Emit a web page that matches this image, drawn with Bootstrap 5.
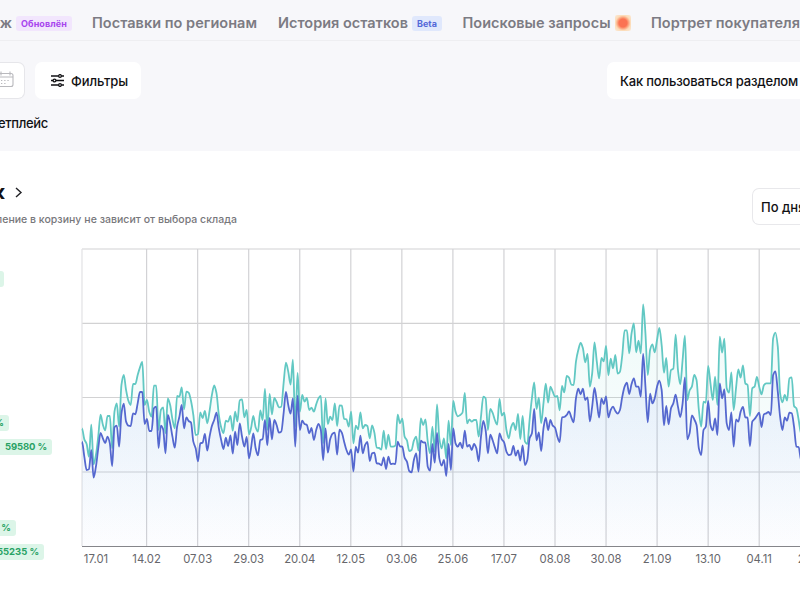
<!DOCTYPE html>
<html lang="ru">
<head>
<meta charset="utf-8">
<meta name="viewport" content="width=device-width, initial-scale=1">
<title>Аналитика</title>
<link href="https://cdn.jsdelivr.net/npm/bootstrap@5.3.0/dist/css/bootstrap.min.css" rel="stylesheet">
<style>
body { width: 800px; height: 600px; overflow: hidden; font-family: Inter, "Noto Sans", sans-serif; color: #111114; background: #fff; font-size: 13px; line-height: 1; }
.clip-start { display: flex; justify-content: flex-end; overflow: hidden; white-space: nowrap; flex: none; }
.page-head { height: 151px; background: #f7f7fa; }
.tabs-bar { height: 41px; border-bottom: 1px solid #eeeef1; padding-top: 6px; color: #7c7b83; font-size: 14.5px; font-weight: 600; }
.tab-item { flex: none; white-space: nowrap; padding-top: 1px; }
.tag { font-size: 9px; font-weight: 700; height: 15px; line-height: 15px; border-radius: 3px; flex: none; text-align: center; }
.tag-new { width: 56px; background: #f2e6fd; color: #a845ee; }
.tag-beta { width: 30px; background: #e0e8fc; color: #5468d8; }
.hot { width: 16px; height: 16px; border-radius: 2px; background: radial-gradient(circle, #fb7352 0 4px, #fca27c 5.5px, #fcdcb9 7.5px, #fbead8 11px); flex: none; }
.tools { height: 37px; margin-top: 21px; font-weight: 500; }
.date-box { width: 25px; height: 37px; border: 1px solid #e6e6ea; border-left: 0; border-radius: 0 7px 7px 0; background: #fff; }
.filter-btn { width: 106px; height: 37px; border-radius: 7px; background: #fff; margin-left: 10px; padding-left: 16px; }
.guide-btn { width: 193px; height: 37px; border-radius: 7px 0 0 7px; background: #fff; padding: 1px 0 0 13px; white-space: nowrap; }
.place { width: 48px; margin-top: 18px; font-weight: 500; }
.title-row { height: 74px; padding-top: 31px; }
.title-end { width: 5px; font-size: 20px; font-weight: 700; }
.hint { width: 237px; font-size: 10.5px; font-weight: 500; color: #77777b; margin-top: 13px; }
.period { width: 48px; height: 37px; border: 1px solid #e8e8eb; border-right: 0; border-radius: 7px 0 0 7px; padding: 1px 0 0 8px; margin-top: 6px; font-weight: 500; white-space: nowrap; overflow: hidden; }
.stats { width: 74px; padding-top: 46px; flex: none; }
.delta { height: 16px; border-radius: 0 3px 3px 0; background: #dcf5e8; color: #28a264; font-size: 9.5px; font-weight: 700; line-height: 16px; }
.d-a { width: 4px; } .d-b { width: 9px; margin-top: 128px; padding-right: 5px; }
.d-c { width: 52px; margin-top: 8px; padding-right: 5px; } .d-d { width: 16px; margin-top: 65px; padding-right: 5px; }
.d-e { width: 44px; margin-top: 8px; padding-right: 5px; }
.axis-label { font-size: 11.3px; fill: #66666b; text-anchor: middle; }
</style>
<script src="https://cdn.jsdelivr.net/npm/bootstrap@5.3.0/dist/js/bootstrap.bundle.min.js"></script>
</head>
<body>
<header class="page-head">
  <nav class="tabs-bar d-flex align-items-center">
    <span class="clip-start" style="width:12px;padding-top:1px"><span>ж</span></span>
    <span class="tag tag-new" style="margin-left:4px"><span data-fit="46">Обновлён</span></span>
    <span class="tab-item" style="margin-left:20px;width:165px"><span data-fit="165">Поставки по регионам</span></span>
    <span class="tab-item" style="margin-left:21px;width:130px"><span data-fit="130">История остатков</span></span>
    <span class="tag tag-beta" style="margin-left:4px">Beta</span>
    <span class="tab-item" style="margin-left:20.500px;width:148px"><span data-fit="148">Поисковые запросы</span></span>
    <span class="hot" style="margin-left:4px"></span>
    <span class="tab-item" style="margin-left:20.500px;width:149px"><span data-fit="149">Портрет покупателя</span></span>
  </nav>
  <div class="tools d-flex align-items-center">
    <div class="date-box d-flex align-items-center overflow-hidden">
      <svg width="14" height="20" viewBox="0 0 14 20" style="margin-top:-3px" fill="none" stroke="#b9b9bd" stroke-width="1.1"><path d="M0 4.5h11q2 0 2 2v9q0 2-2 2H0M0 8h13M10 2.5v4M1 2.5v4"/><path d="M1 11.5h9M1 14.500h6" stroke-dasharray="1.3 1.9"/></svg>
    </div>
    <div class="filter-btn d-flex align-items-center">
      <svg width="13" height="13" viewBox="0 0 13 13" fill="none" stroke="#111114" stroke-width="1.3"><path d="M0 2h7.500M10.500 2H13M0 6.500h2M5 6.500h8M0 11h7.500M10.500 11H13"/><circle cx="9" cy="2" r="1.400"/><circle cx="3.500" cy="6.500" r="1.400"/><circle cx="9" cy="11" r="1.400"/></svg>
      <span class="text-nowrap" style="margin-left:7px;padding-top:1px"><span data-fit="57">Фильтры</span></span>
    </div>
    <div class="guide-btn d-flex align-items-center ms-auto"><span data-fit="178">Как пользоваться разделом</span></div>
  </div>
  <div class="place clip-start"><span data-fit="83">Маркетплейс</span></div>
</header>
<main>
  <div class="title-row d-flex justify-content-between">
    <div>
      <div class="d-flex align-items-center">
        <div class="title-end clip-start"><span>к</span></div>
        <svg width="8" height="11" viewBox="0 0 8 11" style="margin-left:10px" fill="none" stroke="#222226" stroke-width="1.4"><path d="M1 1l5 4.500L1 10"/></svg>
      </div>
      <div class="hint clip-start"><span>Добавление <span data-fit="207">в корзину не зависит от выбора склада</span></span></div>
    </div>
    <div class="period d-flex align-items-center">По дням</div>
  </div>
  <div class="d-flex">
    <div class="stats">
      <div class="delta d-a"></div>
      <div class="delta d-b clip-start">%</div>
      <div class="delta d-c clip-start"><span data-fit="42">59580 %</span></div>
      <div class="delta d-d clip-start">%</div>
      <div class="delta d-e clip-start"><span data-fit="42">55235 %</span></div>
    </div>
    <svg id="chart" width="726" height="345" viewBox="74 225 726 345">
      <defs>
        <linearGradient id="tealFill" gradientUnits="userSpaceOnUse" x1="0" y1="300" x2="0" y2="546"><stop stop-color="#63d0c8" stop-opacity=".11"/><stop offset="1" stop-color="#63d0c8" stop-opacity="0"/></linearGradient>
        <linearGradient id="blueFill" gradientUnits="userSpaceOnUse" x1="0" y1="350" x2="0" y2="546"><stop stop-color="#5b7cf0" stop-opacity=".11"/><stop offset="1" stop-color="#5b7cf0" stop-opacity=".015"/></linearGradient>
      </defs>
    </svg>
  </div>
</main>
<script>
// Fit labels to their column widths through tracking.
document.querySelectorAll('[data-fit]').forEach(el => {
  const want = +el.dataset.fit, w = el.getBoundingClientRect().width;
  el.style.letterSpacing = (want - w) / el.textContent.length + 'px';
});

// Daily samples by period: [first x, last x, top level, depths in thirds of a pixel].
const teal = [
 [82,249,340,[265,298,312,350,254,373,345,290,224,254,271,228,228,325,215,190,260,135,105,150,182,195,132,132,105,82,66,195,180,215,230,137,137,270,210,202,280,175,195,238,265,168,170,142,208,155,158,183,225,285,283,217,234,213,250,213,165,136,160,225,262,279,242,245,228,272,215,244,181,178,232,210,283]],
 [251,400,340,[265,228,262,275,211,240,147,270,162,223,174,186,202,200,130,68,95,134,59,260,99,215,165,185,174,210,203,215,193,175,168,310,175,252,230,240,190,258,196,197,237,238,260,215,310,257,268,217,265,255,258,295,256,278,323,324,329,272,327,284,320,320,317,224,250]],
 [402.3,564.3,370,[146,200,211,243,240,212,200,242,145,165,148,215,250,170,245,103,205,235,205,265,152,225,93,125,139,135,128,69,160,148,155,150,150,200,140,80,85,180,117,128,150,164,87,137,128,180,205,172,159,180,132,207,138,215,222,150,85,37,117,83,160,100,41,98,50,65,80,78,121,48,67]],
 [566.7,668.6,290,[258,263,284,285,215,180,159,175,217,192,290,250,157,215,265,204,214,168,256,206,235,195,251,245,195,121,121,190,130,100,187,152,190,43,130,255,180,163,187,150,114,165,248,204,290]],
 [671,801,320,[150,146,44,150,193,120,47,240,211,200,165,180,270,320,245,248,138,190,240,170,255,50,98,56,205,218,157,270,205,148,173,136,190,195,288,205,200,171,200,223,196,190,190,190,55,38,80,220,247,225,242,175,172,258,265,300,340]]
];
const blue = [
 [82,249,340,[305,350,390,388,330,413,380,325,279,295,309,290,310,378,262,257,320,220,191,245,257,258,220,223,190,156,156,252,237,273,273,205,200,324,257,268,340,225,250,290,323,260,230,195,265,232,243,248,305,325,364,310,308,282,332,290,258,240,218,265,300,327,293,318,286,341,275,315,250,290,320,291,355]],
 [251,400,340,[325,280,325,346,300,297,240,316,234,298,240,255,278,275,220,156,195,221,175,320,167,270,242,252,255,280,264,300,270,252,270,360,265,338,298,281,278,344,269,278,305,330,344,328,394,320,338,287,340,315,306,363,340,338,370,371,376,352,387,350,372,371,372,305,319]],
 [402.3,564.3,370,[230,263,275,303,307,270,250,305,212,217,218,290,302,222,278,189,265,287,270,318,222,300,175,220,230,218,235,182,230,225,240,222,235,274,200,153,180,250,194,210,232,250,190,208,217,245,255,253,228,257,241,272,226,285,270,205,190,117,211,187,243,175,143,180,150,167,173,200,216,142,141]],
 [566.7,668.6,290,[375,364,382,397,325,296,313,296,330,322,394,350,294,335,383,325,342,319,382,360,350,363,371,360,320,290,278,312,282,265,290,290,320,192,290,397,311,340,325,290,272,300,406,348,403]],
 [671,801,320,[265,250,224,260,291,250,172,358,340,286,298,315,385,405,330,320,243,315,331,295,345,190,235,208,310,330,277,380,298,305,275,261,292,293,379,305,297,287,278,321,283,280,276,285,165,154,215,290,330,292,302,278,280,320,380,381,420]]
];
const svg = document.getElementById('chart');
function add(tag, attrs, text) {
  const e = document.createElementNS('http://www.w3.org/2000/svg', tag);
  for (const k in attrs) e.setAttribute(k, attrs[k]);
  if (text) e.textContent = text;
  svg.appendChild(e);
}
const points = s => s.flatMap(([a, b, top, v]) => v.map((y, i) => [a + (b - a) * i / (v.length - 1), top + y / 3]));
// Monotone cubic: flat tangents at local extremes.
function curve(p) {
  const m = p.map((q, i) => {
    if (!i || i === p.length - 1) return 0;
    const l = (q[1] - p[i-1][1]) / (q[0] - p[i-1][0]), r = (p[i+1][1] - q[1]) / (p[i+1][0] - q[0]);
    return l * r <= 0 ? 0 : 2 * l * r / (l + r);
  });
  let d = `M${p[0]}`;
  for (let i = 1; i < p.length; i++) {
    const h = (p[i][0] - p[i-1][0]) / 3;
    d += `C${p[i-1][0]+h} ${p[i-1][1]+m[i-1]*h} ${p[i][0]-h} ${p[i][1]-m[i]*h} ${p[i]}`;
  }
  return d;
}
const t = curve(points(teal)), b = curve(points(blue));
[249, 323.3, 397.5, 472].forEach(y => add('path', {d: `M82 ${y}H800`, stroke: '#d2d2d3', 'stroke-width': 1.2}));
const labels = ['17.01','14.02','07.03','29.03','20.04','12.05','03.06','25.06','17.07','08.08','30.08','21.09','13.10','04.11','26.11'];
labels.forEach((s, i) => {
  const x = i ? 146.6 + 51.05 * (i - 1) : 82;
  add('path', {d: `M${x} 249V546`, stroke: i ? '#d2d2d5' : '#e2e2e4', 'stroke-width': 1.2});
  add('text', {x: i ? x : 96, y: 563, class: 'axis-label'}, s);
});
add('path', {d: t + 'V546H82Z', fill: 'url(#tealFill)'});
add('path', {d: b + 'V546H82Z', fill: 'url(#blueFill)'});
add('path', {d: 'M82 546.5H800', stroke: '#85858a', 'stroke-width': 1.1});
add('path', {d: t, fill: 'none', stroke: '#62c8c3', 'stroke-width': 1.8, 'stroke-linejoin': 'round'});
add('path', {d: b, fill: 'none', stroke: '#5568cf', 'stroke-width': 1.8, 'stroke-linejoin': 'round'});
</script>
</body>
</html>
